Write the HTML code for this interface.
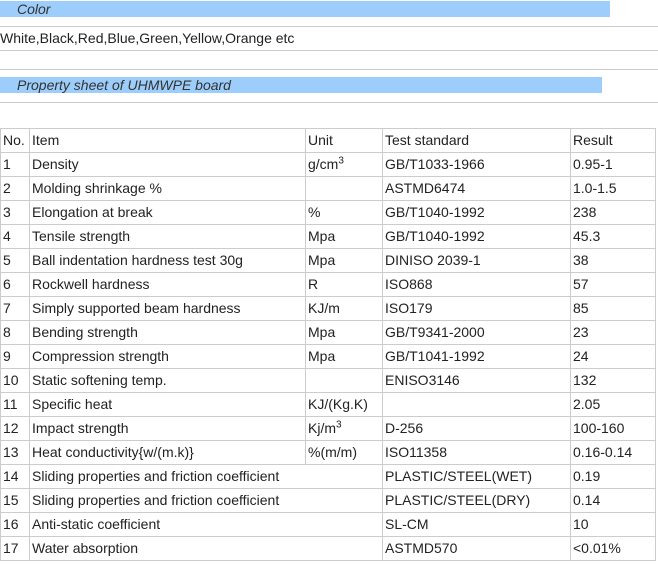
<!DOCTYPE html>
<html><head><style>
body{margin:0;width:658px;height:564px;background:#fff;font-family:"Liberation Sans",Arial,sans-serif;font-size:14px;color:#222;position:relative;overflow:hidden}
.bar{position:absolute;left:0;height:16px;background:#9dcdfa;font-style:italic;color:#333;line-height:16px;padding-left:17px;box-sizing:border-box}
.hl{position:absolute;left:0;width:658px;height:0;border-top:1px solid #ccc}
table{position:absolute;left:0;top:128px;border-collapse:collapse;width:656px;table-layout:fixed}
td{border:1px solid #ccc;height:23px;padding:0 0 0 2px;line-height:23px;white-space:nowrap;overflow:hidden}
sup{font-size:10px;line-height:0}
</style></head><body>
<div class="bar" style="top:1px;width:610px">Color</div>
<div class="hl" style="top:26px"></div>
<div style="position:absolute;left:0;top:30px;line-height:17px">White,Black,Red,Blue,Green,Yellow,Orange etc</div>
<div class="hl" style="top:50px"></div>
<div class="hl" style="top:69px"></div>
<div class="bar" style="top:77px;width:602px">Property sheet of UHMWPE board</div>
<div class="hl" style="top:102px"></div>
<table>
<colgroup><col style="width:29px"><col style="width:276px"><col style="width:77px"><col style="width:188px"><col></colgroup>
<tr><td>No.</td><td>Item</td><td>Unit</td><td>Test standard</td><td>Result</td></tr>
<tr><td>1</td><td>Density</td><td>g/cm<sup>3</sup></td><td>GB/T1033-1966</td><td>0.95-1</td></tr>
<tr><td>2</td><td>Molding shrinkage %</td><td></td><td>ASTMD6474</td><td>1.0-1.5</td></tr>
<tr><td>3</td><td>Elongation at break</td><td>%</td><td>GB/T1040-1992</td><td>238</td></tr>
<tr><td>4</td><td>Tensile strength</td><td>Mpa</td><td>GB/T1040-1992</td><td>45.3</td></tr>
<tr><td>5</td><td>Ball indentation hardness test 30g</td><td>Mpa</td><td>DINISO 2039-1</td><td>38</td></tr>
<tr><td>6</td><td>Rockwell hardness</td><td>R</td><td>ISO868</td><td>57</td></tr>
<tr><td>7</td><td>Simply supported beam hardness</td><td>KJ/m</td><td>ISO179</td><td>85</td></tr>
<tr><td>8</td><td>Bending strength</td><td>Mpa</td><td>GB/T9341-2000</td><td>23</td></tr>
<tr><td>9</td><td>Compression strength</td><td>Mpa</td><td>GB/T1041-1992</td><td>24</td></tr>
<tr><td>10</td><td>Static softening temp.</td><td></td><td>ENISO3146</td><td>132</td></tr>
<tr><td>11</td><td>Specific heat</td><td>KJ/(Kg.K)</td><td></td><td>2.05</td></tr>
<tr><td>12</td><td>Impact strength</td><td>Kj/m<sup>3</sup></td><td>D-256</td><td>100-160</td></tr>
<tr><td>13</td><td>Heat conductivity{w/(m.k)}</td><td>%(m/m)</td><td>ISO11358</td><td>0.16-0.14</td></tr>
<tr><td>14</td><td colspan="2">Sliding properties and friction coefficient</td><td>PLASTIC/STEEL(WET)</td><td>0.19</td></tr>
<tr><td>15</td><td colspan="2">Sliding properties and friction coefficient</td><td>PLASTIC/STEEL(DRY)</td><td>0.14</td></tr>
<tr><td>16</td><td colspan="2">Anti-static coefficient</td><td>SL-CM</td><td>10</td></tr>
<tr><td>17</td><td colspan="2">Water absorption</td><td>ASTMD570</td><td>&lt;0.01%</td></tr>
</table>
</body></html>
